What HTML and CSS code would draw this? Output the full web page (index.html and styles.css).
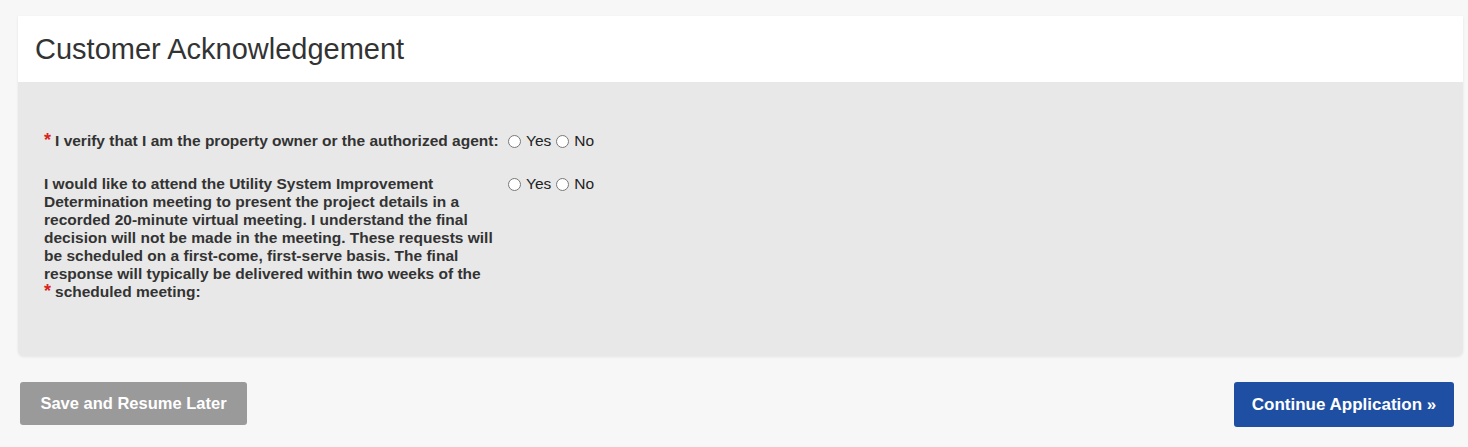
FILE: index.html
```html
<!DOCTYPE html>
<html lang="en">
<head>
    <meta charset="UTF-8">
    <meta name="viewport" content="width=device-width, initial-scale=1.0">
    <title>Customer Acknowledgement</title>
    <link rel="stylesheet" href="styles.css">
</head>
<body>
    <div class="panel">
        <div class="panel-heading">
            <h2>Customer Acknowledgement</h2>
        </div>
        <div class="panel-body">
            <div class="field">
                <label class="field-label"><span class="required">*</span>I verify that I am the property owner or the authorized agent:</label>
                <div class="options">
                    <label class="option"><input type="radio" name="owner" value="yes">Yes</label>
                    <label class="option"><input type="radio" name="owner" value="no">No</label>
                </div>
            </div>
            <div class="field">
                <label class="field-label">I would like to attend the Utility System Improvement Determination meeting to present the project details in a recorded 20-minute virtual meeting. I understand the final decision will not be made in the meeting. These requests will be scheduled on a first-come, first-serve basis. The final response will typically be delivered within two weeks of the <span class="required">*</span>scheduled meeting:</label>
                <div class="options">
                    <label class="option"><input type="radio" name="meeting" value="yes">Yes</label>
                    <label class="option"><input type="radio" name="meeting" value="no">No</label>
                </div>
            </div>
        </div>
    </div>

    <div class="actions">
        <button class="btn btn-save">Save and Resume Later</button>
        <button class="btn btn-continue">Continue Application &raquo;</button>
    </div>
</body>
</html>
```

FILE: styles.css
```css
body {
    margin: 0;
    padding: 16px 5px 0 18px;
    background-color: #f7f7f7;
    font-family: 'Liberation Sans', Arial, sans-serif;
    color: #333;
}

.panel {
    background-color: #e8e8e8;
    border-radius: 0 0 6px 6px;
    box-shadow: 0 1px 3px rgba(0,0,0,0.08);
}

.panel-heading {
    background-color: white;
    height: 66px;
    padding-left: 17px;
    display: flex;
    align-items: center;
}

.panel-heading h2 {
    margin: 0;
    font-size: 29px;
    font-weight: normal;
    color: #333;
}

.panel-body {
    padding: 50px 26px 55px;
}

.field {
    display: grid;
    grid-template-columns: 463px auto;
    margin-bottom: 25px;
    align-items: start;
}

.field:last-child {
    margin-bottom: 0;
}

.field-label {
    font-size: 15.5px;
    font-weight: bold;
    line-height: 18px;
    color: #333;
}

.required {
    color: #d9251c;
    font-size: 18px;
    line-height: 0;
    margin-right: 4px;
}

.options {
    display: flex;
    gap: 4px;
}

.option {
    display: flex;
    align-items: center;
    font-size: 15.5px;
    line-height: 18px;
    color: #222;
}

.option input {
    width: 13px;
    height: 13px;
    margin: 0 5px 0 1px;
}

.actions {
    display: flex;
    justify-content: space-between;
    margin-top: 26px;
    padding: 0 9px 0 2px;
}

.btn {
    border: none;
    border-radius: 3px;
    color: white;
    font-family: 'Liberation Sans', Arial, sans-serif;
    font-size: 16.5px;
    font-weight: bold;
    cursor: pointer;
}

.btn-save {
    width: 227px;
    height: 43px;
    background-color: #9a9a9a;
}

.btn-continue {
    width: 220px;
    height: 45px;
    font-size: 17px;
    background-color: #1e4fa3;
}
```
